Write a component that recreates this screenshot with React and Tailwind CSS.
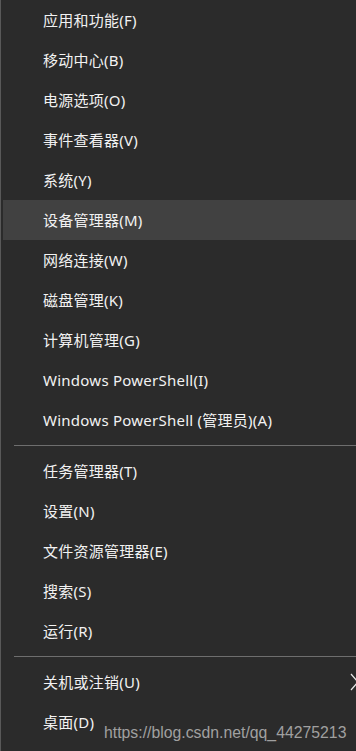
import React from 'react';

const groups = [
  [
    '应用和功能(F)',
    '移动中心(B)',
    '电源选项(O)',
    '事件查看器(V)',
    '系统(Y)',
    '设备管理器(M)',
    '网络连接(W)',
    '磁盘管理(K)',
    '计算机管理(G)',
    'Windows PowerShell(I)',
    'Windows PowerShell (管理员)(A)',
  ],
  ['任务管理器(T)', '设置(N)', '文件资源管理器(E)', '搜索(S)', '运行(R)'],
];

const MenuItem = ({ label, active, arrow }) => (
  <div
    className={`h-10 flex items-center justify-between pl-10 ${active ? 'bg-[#414141]' : ''}`}
  >
    <span className="text-[15px] text-[#f2f2f2] leading-none tracking-[0.25px]">{label}</span>
    {arrow && (
      <svg width="9" height="18" viewBox="0 0 9 18" className="mr-[-3px]">
        <path d="M1 1 L8 9 L1 17" stroke="#e8e8e8" strokeWidth="1.2" fill="none" />
      </svg>
    )}
  </div>
);

const Separator = () => (
  <div className="py-[5px] pl-[11px]">
    <div className="h-px bg-[#6e6e6e]" />
  </div>
);

export default function App() {
  return (
    <div
      className="relative w-[356px] h-[751px] overflow-hidden bg-[#2b2b2b] border-l border-[#595959] pl-[2px]"
      style={{ fontFamily: '"Noto Sans", "Noto Sans CJK SC", sans-serif' }}
    >
      {groups.map((items, gi) => (
        <div key={gi}>
          {items.map(label => (
            <MenuItem key={label} label={label} active={label === '设备管理器(M)'} />
          ))}
          <Separator />
        </div>
      ))}
      <MenuItem label="关机或注销(U)" arrow />
      <MenuItem label="桌面(D)" />

      {/* watermark */}
      <div
        className="absolute left-[103px] top-[725px] text-[15.8px] leading-none text-[#a0a0a0]"
        style={{ fontFamily: '"Liberation Sans", Arial, sans-serif' }}
      >
        https://blog.csdn.net/qq_44275213
      </div>
    </div>
  );
}
